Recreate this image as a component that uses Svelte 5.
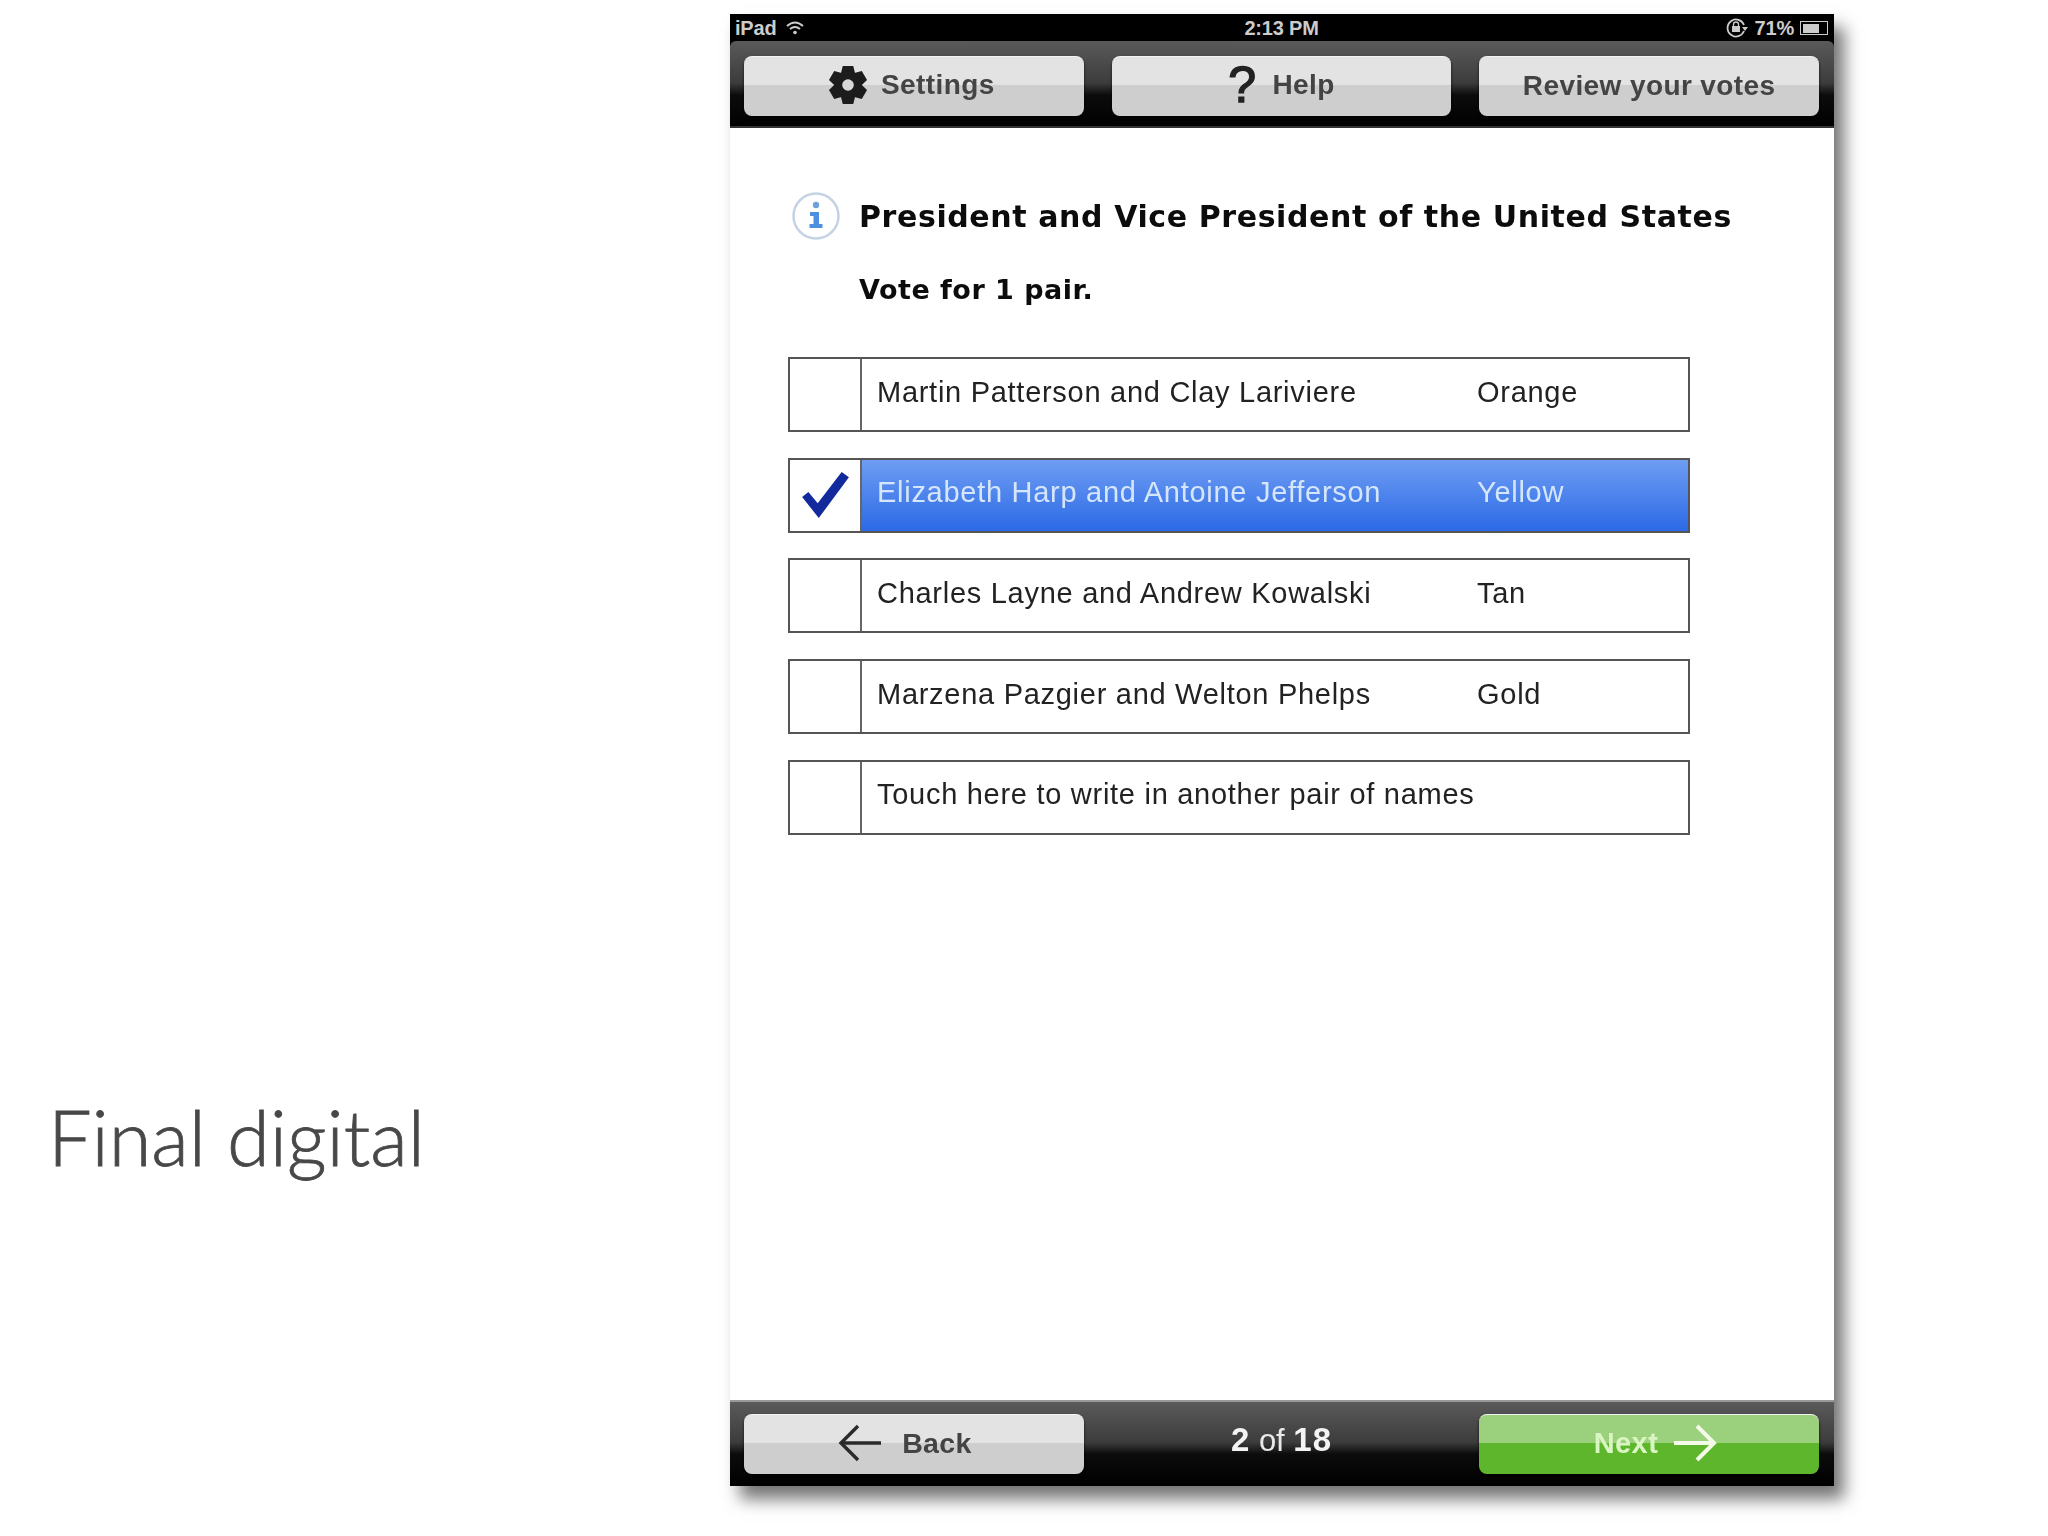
<script>
  const rows = [
    { name: 'Martin Patterson and Clay Lariviere', party: 'Orange' },
    { name: 'Elizabeth Harp and Antoine Jefferson', party: 'Yellow', on: true },
    { name: 'Charles Layne and Andrew Kowalski', party: 'Tan' },
    { name: 'Marzena Pazgier and Welton Phelps', party: 'Gold' },
    { name: 'Touch here to write in another pair of names', party: '' }
  ];
  const teeth = [0, 60, 120, 180, 240, 300];
</script>

<div class="page">
  <div class="label">Final digital</div>
  <div class="device">
    <div class="head">
      <div class="status">
        <div class="st-left">
          <span>iPad</span>
          <svg width="20" height="16" viewBox="0 0 20 16" fill="none" stroke="#ccc" stroke-width="2">
            <path d="M2 6 Q10 -1 18 6" /><path d="M5 9 Q10 5 15 9" /><circle cx="10" cy="12.5" r="1.8" fill="#ccc" stroke="none" />
          </svg>
        </div>
        <div class="st-mid">2:13 PM</div>
        <div class="st-right">
          <svg width="24" height="22" viewBox="0 0 24 22" fill="none" stroke="#ccc" stroke-width="1.8">
            <path d="M19 14 A8.5 8.5 0 1 1 19 8" /><path d="M17 10 L23 10 L20 14 Z" fill="#ccc" stroke="none" />
            <rect x="7" y="9" width="8" height="6" fill="#ccc" stroke="none" /><path d="M8.5 9 V7.5 A2.5 2.5 0 0 1 13.5 7.5 V9" stroke-width="1.3" />
          </svg>
          <span>71%</span>
          <div class="batt"><div class="batt-fill"></div></div>
        </div>
      </div>

      <div class="bar top">
        <button class="btn settings">
          <svg width="40" height="40" viewBox="0 0 38 38">
            {#each teeth as t}
              <path d="M14 1 H24 L26 9 H12 Z" fill="#1c1c1c" transform="rotate({t} 19 19)" />
            {/each}
            <circle cx="19" cy="19" r="12.5" fill="#1c1c1c" />
            <circle cx="19" cy="19" r="5.5" fill="#d8d8d8" />
          </svg>
          <span>Settings</span>
        </button>
        <button class="btn help">
          <span class="q">?</span>
          <span>Help</span>
        </button>
        <button class="btn"><span>Review your votes</span></button>
      </div>
    </div>

    <main>
      <div class="title-row">
        <svg class="info" width="50" height="50" viewBox="0 0 50 50">
          <circle cx="25" cy="25" r="22.5" fill="#fff" stroke="#c4d2e4" stroke-width="2.5" />
          <circle cx="25" cy="14" r="3.2" fill="#6f9fdc" />
          <path d="M19 21 H28 V33 H31.5 V37 H18.5 V33 H22.5 V25 H19 Z" fill="#4f8fdf" />
        </svg>
        <h1>President and Vice President of the United States</h1>
      </div>
      <p class="vote">Vote for 1 pair.</p>

      <div class="list">
        {#each rows as r}
          <div class="row" class:on={r.on}>
            <div class="box">
              {#if r.on}
                <svg width="52" height="52" viewBox="0 0 50 50">
                  <path d="M3 27 L9 22 L18 33 L41 3 L48 8 L19 47 Z" fill="#122a9c" />
                </svg>
              {/if}
            </div>
            <div class="cell">
              <span class="name">{r.name}</span>
              {#if r.party}<span class="party">{r.party}</span>{/if}
            </div>
          </div>
        {/each}
      </div>
    </main>

    <div class="bar bottom">
      <button class="btn back">
        <svg width="44" height="38" viewBox="0 0 44 38" fill="none" stroke="#2a2a2a" stroke-width="3.4">
          <path d="M3 19 H43" /><path d="M20 2 L3 19 L20 36" />
        </svg>
        <span>Back</span>
      </button>
      <div class="count"><b>2</b> of <b>18</b></div>
      <button class="btn next">
        <span>Next</span>
        <svg width="44" height="38" viewBox="0 0 44 38" fill="none" stroke="#f3fbe8" stroke-width="4">
          <path d="M1 19 H41" /><path d="M24 2 L41 19 L24 36" />
        </svg>
      </button>
    </div>
  </div>
</div>

<style>
  :global(body) {
    margin: 0;
    background: #fff;
  }
  .page {
    width: 2048px;
    height: 1536px;
    display: flex;
    padding: 14px 0 0 48px;
    box-sizing: border-box;
    overflow: hidden;
    font-family: "Liberation Sans", Arial, sans-serif;
  }
  .label {
    width: 682px;
    margin-top: 1078px;
    font-family: Lato, sans-serif;
    font-weight: 300;
    font-size: 77.5px;
    line-height: 90px;
    height: 90px;
    color: #484848;
    -webkit-text-stroke: 0.8px #484848;
    white-space: nowrap;
  }
  .device {
    width: 1104px;
    height: 1472px;
    display: flex;
    flex-direction: column;
    background: #fff;
    box-shadow: 10px 13px 16px rgba(0, 0, 0, 0.55);
    filter: blur(0.6px);
  }
  .head {
    background: #000;
  }
  .status {
    height: 27px;
    color: #ccc;
    font-size: 20px;
    font-weight: 700;
    display: grid;
    grid-template-columns: 1fr auto 1fr;
    align-items: center;
    padding: 1px 6px 0 5px;
    box-sizing: border-box;
    letter-spacing: -0.2px;
  }
  .st-left {
    display: flex;
    align-items: center;
    gap: 9px;
  }
  .st-right {
    display: flex;
    align-items: center;
    justify-content: flex-end;
    gap: 6px;
  }
  .batt {
    width: 28px;
    height: 14px;
    border: 1.5px solid #ccc;
    padding: 1.5px;
    box-sizing: border-box;
  }
  .batt-fill {
    width: 70%;
    height: 100%;
    background: #ccc;
  }
  .bar {
    background: linear-gradient(#5a5a5a 0, #3c3c3c 48%, #0c0c0c 62%, #000 100%);
    display: flex;
    align-items: center;
    padding: 0 15px 0 14px;
    gap: 28px;
    box-sizing: border-box;
  }
  .top {
    height: 87px;
    padding-top: 2px;
    border-radius: 6px 6px 0 0;
    box-shadow: inset 0 -2px #333;
  }
  .bottom {
    height: 86px;
    border-top: 2px solid #999;
    justify-content: space-between;
    gap: 0;
  }
  .btn {
    width: 340px;
    height: 60px;
    border: 0;
    border-top: 1px solid #f4f4f4;
    border-radius: 8px;
    background: linear-gradient(#e3e3e3 0 48%, #cecece 48% 100%);
    box-shadow: 0 2px 3px rgba(0, 0, 0, 0.75);
    color: #444;
    font-family: "Liberation Sans", Arial, sans-serif;
    font-size: 28px;
    font-weight: 700;
    letter-spacing: 0.4px;
    display: flex;
    align-items: center;
    justify-content: center;
    gap: 12px;
    padding: 0;
  }
  .settings {
    gap: 13px;
    padding: 0 5px 2px 0;
  }
  .help {
    gap: 16px;
    padding-bottom: 2px;
  }
  .q {
    font-size: 50px;
    font-weight: 400;
    color: #222;
    line-height: 1;
    -webkit-text-stroke: 1.4px #222;
  }
  .back {
    gap: 20px;
    padding: 0 18px 3px 0;
    font-size: 28.5px;
  }
  .next {
    background: linear-gradient(#9bd07d 0 48%, #5eb62c 48% 100%);
    color: #d9f5c2;
    gap: 15px;
    padding: 0 0 3px 13px;
    font-size: 29px;
  }
  .count {
    color: #e8e8e8;
    font-size: 31px;
    margin-top: -9px;
  }
  .count b {
    color: #f4f4f4;
    font-size: 33px;
    letter-spacing: 1px;
  }
  main {
    flex: 1;
    padding: 62px 0 0 58px;
    min-height: 0;
  }
  .title-row {
    display: flex;
    align-items: center;
    gap: 18px;
    margin-left: 3px;
    height: 52px;
  }
  .info {
    flex: none;
  }
  h1,
  .vote {
    margin: 0;
    font-family: "DejaVu Sans", sans-serif;
    font-weight: 700;
    color: #0c0c0c;
    white-space: nowrap;
  }
  h1 {
    font-size: 30px;
    letter-spacing: 0.6px;
  }
  .vote {
    font-size: 27px;
    letter-spacing: 0.5px;
    margin: 31px 0 0 71px;
    line-height: 34px;
  }
  .list {
    margin-top: 50px;
    width: 902px;
    display: flex;
    flex-direction: column;
    gap: 25.7px;
  }
  .row {
    height: 75px;
    border: 2px solid #555;
    box-sizing: border-box;
    display: flex;
    background: #fff;
  }
  .box {
    width: 70px;
    flex: none;
    border-right: 2px solid #666;
    display: flex;
    align-items: center;
    justify-content: center;
  }
  .cell {
    flex: 1;
    display: flex;
    align-items: center;
    padding: 0 0 5px 15px;
    font-size: 29px;
    color: #222;
    letter-spacing: 0.72px;
    white-space: nowrap;
  }
  .name {
    width: 600px;
    flex: none;
  }
  .row.on .cell {
    background: linear-gradient(#6e9df2, #2c69e6);
    color: #d5e6fb;
  }
</style>
